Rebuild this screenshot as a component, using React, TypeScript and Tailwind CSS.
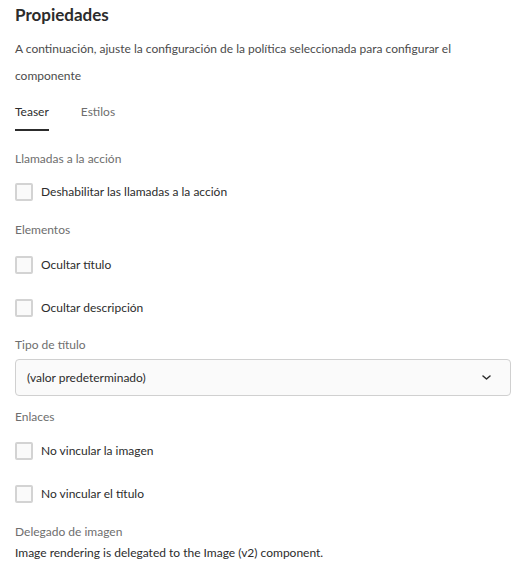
import React from "react";

function Checkbox({ label }: { label: string }) {
  return (
    <div className="flex items-center h-[18px]">
      <span className="w-[18px] h-[18px] border-2 border-[#d3d3d3] bg-[#fafafa] rounded-[2px] shrink-0" />
      <span className="ml-[8px] text-[12px] text-[#2c2c2c]">{label}</span>
    </div>
  );
}

function Label({ children }: { children: React.ReactNode }) {
  return <div className="text-[12px] text-[#6e6e6e] leading-[16px]">{children}</div>;
}

export default function App() {
  return (
    <div
      className="w-[526px] h-[568px] bg-white px-[15px] overflow-hidden"
      style={{ fontFamily: "Lato, 'Noto Sans', sans-serif" }}
    >
      <h1 className="pt-[3px] text-[17px] font-bold text-[#2c2c2c] leading-[24px]">Propiedades</h1>
      <p className="mt-[8px] text-[12px] text-[#4b4b4b] leading-[27px]">
        A continuación, ajuste la configuración de la política seleccionada para configurar el componente
      </p>
      <div className="mt-[15px] flex gap-[32px] text-[12px]">
        <div className="flex flex-col">
          <span className="text-[#2c2c2c] leading-[16px]">Teaser</span>
          <span className="mt-[9px] h-[2px] bg-[#2c2c2c]" />
        </div>
        <span className="text-[#6e6e6e] leading-[16px]">Estilos</span>
      </div>
      <div className="mt-[20px]">
        <Label>Llamadas a la acción</Label>
      </div>
      <div className="mt-[16px]">
        <Checkbox label="Deshabilitar las llamadas a la acción" />
      </div>
      <div className="mt-[21px]">
        <Label>Elementos</Label>
      </div>
      <div className="mt-[18px] flex flex-col gap-[25px]">
        <Checkbox label="Ocultar título" />
        <Checkbox label="Ocultar descripción" />
      </div>
      <div className="mt-[20px]">
        <Label>Tipo de título</Label>
      </div>
      <div className="mt-[6px] h-[37px] border border-[#d0d0d0] bg-[#fafafa] rounded-[4px] flex items-center justify-between pl-[11px] pr-[19px]">
        <span className="text-[12px] text-[#2c2c2c]">(valor predeterminado)</span>
        <svg width="9" height="5" viewBox="0 0 9 5" fill="none">
          <path d="M1 1l3.5 3 3.5-3" stroke="#2c2c2c" strokeWidth="1.5" strokeLinecap="round" strokeLinejoin="round" />
        </svg>
      </div>
      <div className="mt-[13px]">
        <Label>Enlaces</Label>
      </div>
      <div className="mt-[17px] flex flex-col gap-[25px]">
        <Checkbox label="No vincular la imagen" />
        <Checkbox label="No vincular el título" />
      </div>
      <div className="mt-[21px]">
        <Label>Delegado de imagen</Label>
      </div>
      <div className="mt-[5px] text-[12px] text-[#2c2c2c] leading-[16px]">
        Image rendering is delegated to the Image (v2) component.
      </div>
    </div>
  );
}
